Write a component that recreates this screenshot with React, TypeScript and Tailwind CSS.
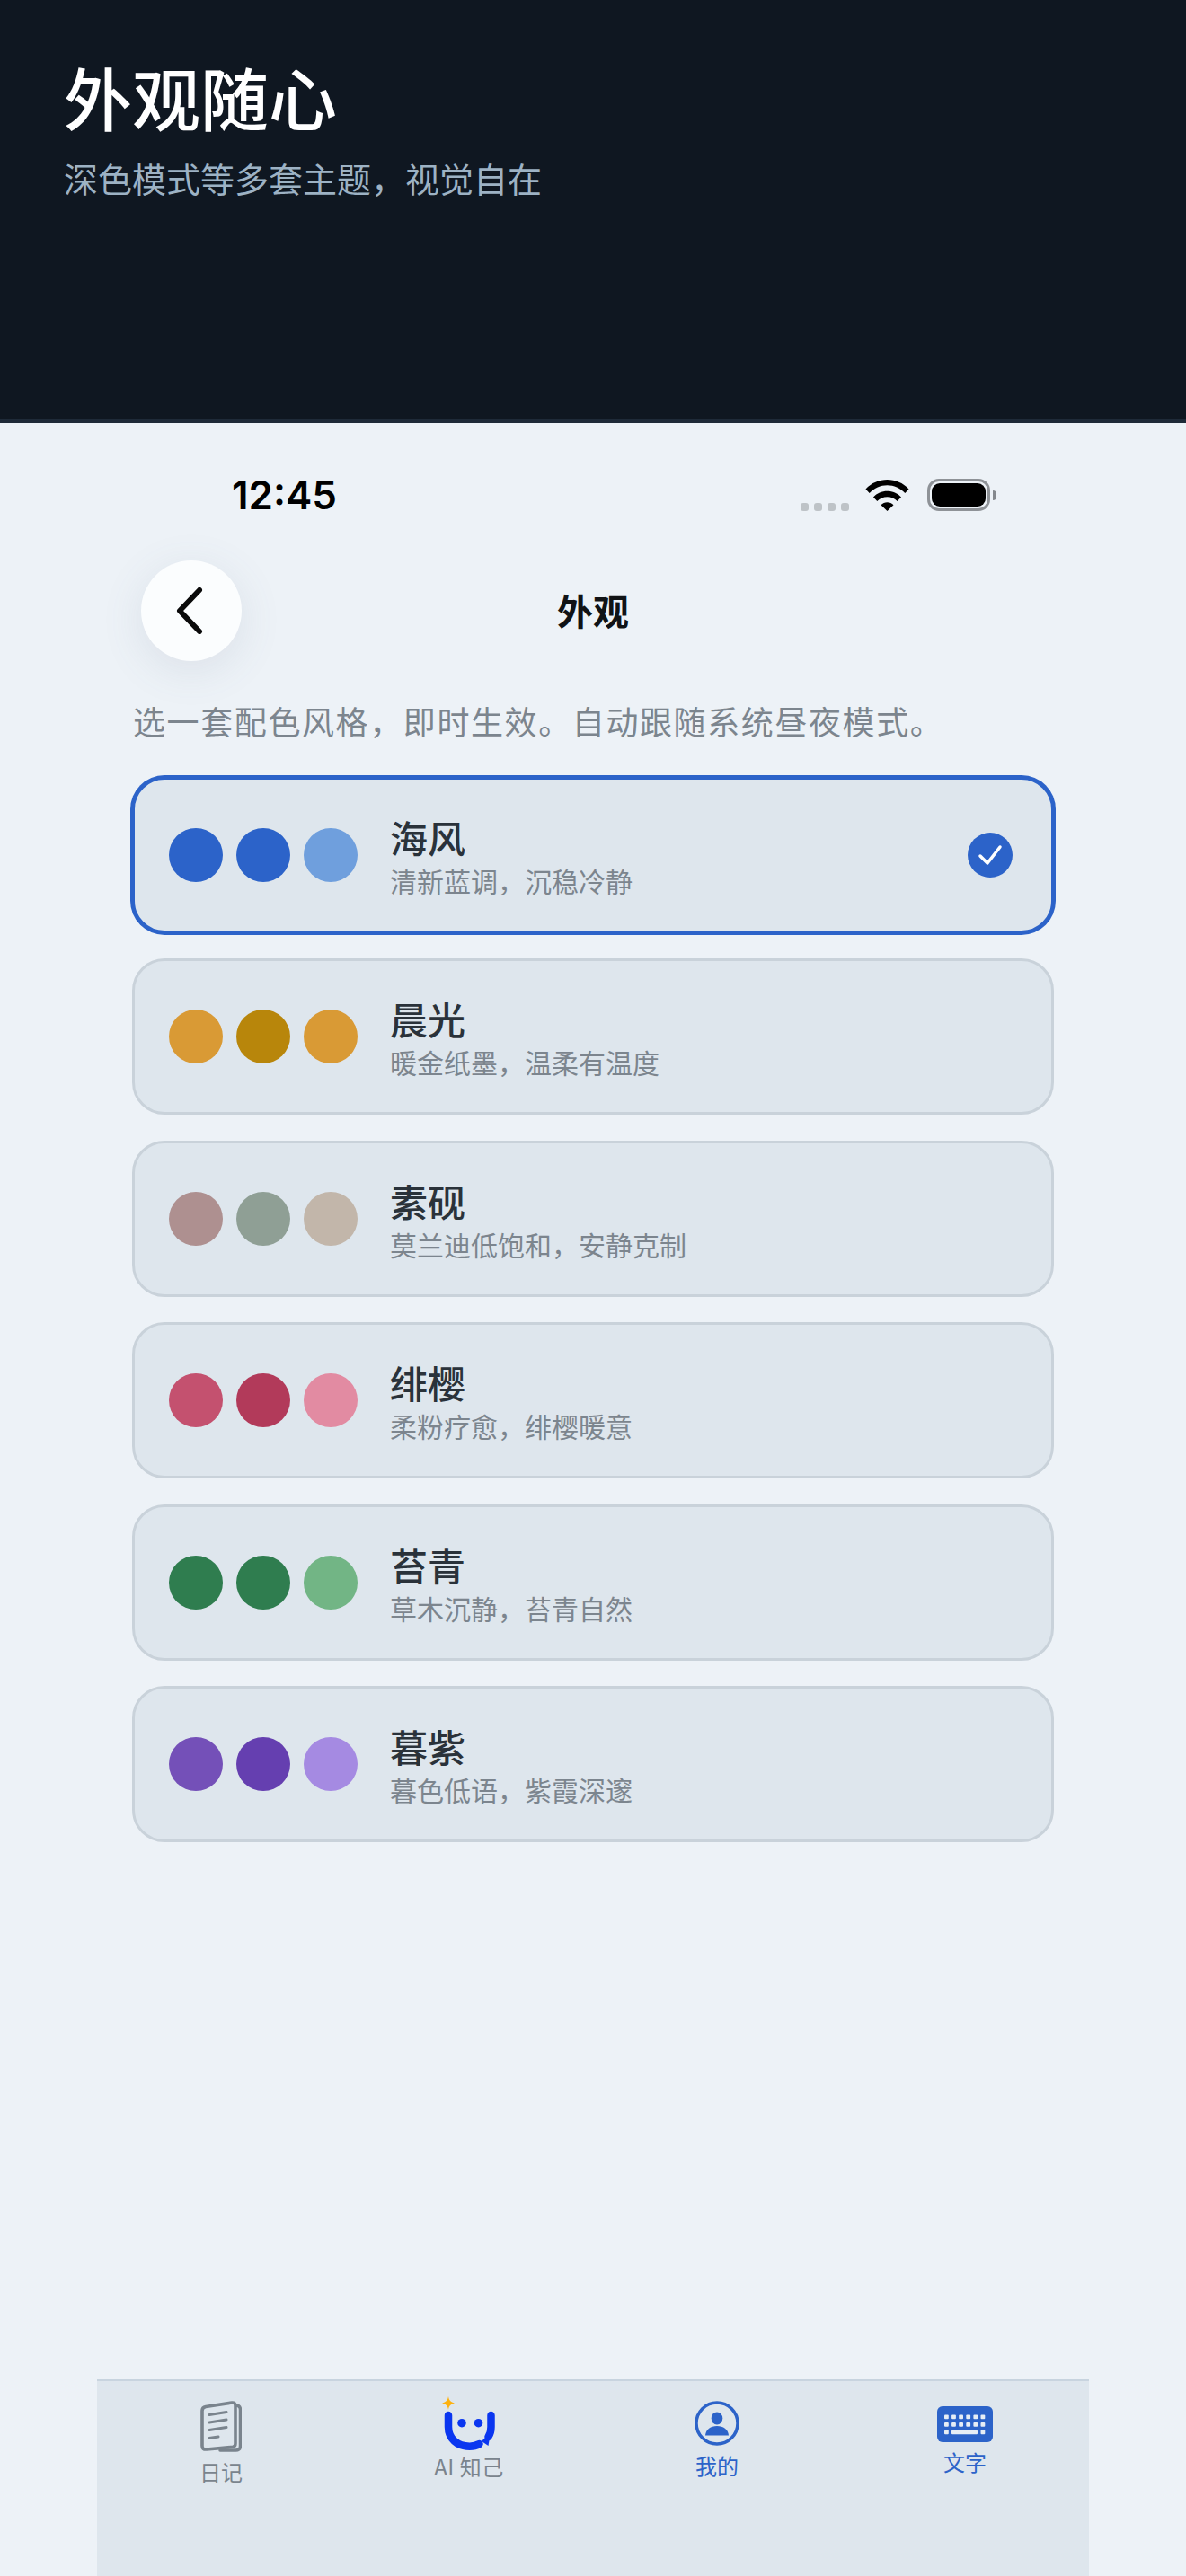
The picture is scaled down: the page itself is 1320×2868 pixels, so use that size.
import React from "react";

const cjk = "font-['Noto_Sans_CJK_SC','Noto_Sans',sans-serif]";

const themes = [
  { name: "海风", desc: "清新蓝调，沉稳冷静", colors: ["bg-[#2c63c9]", "bg-[#2c63c9]", "bg-[#6f9fdd]"], selected: true },
  { name: "晨光", desc: "暖金纸墨，温柔有温度", colors: ["bg-[#d99a35]", "bg-[#b8860b]", "bg-[#d99a35]"] },
  { name: "素砚", desc: "莫兰迪低饱和，安静克制", colors: ["bg-[#ae9090]", "bg-[#8f9f95]", "bg-[#c2b6aa]"] },
  { name: "绯樱", desc: "柔粉疗愈，绯樱暖意", colors: ["bg-[#c4516f]", "bg-[#b23a5a]", "bg-[#e28ba2]"] },
  { name: "苔青", desc: "草木沉静，苔青自然", colors: ["bg-[#2f7d4f]", "bg-[#2f7d4f]", "bg-[#72b585]"] },
  { name: "暮紫", desc: "暮色低语，紫霞深邃", colors: ["bg-[#7450b8]", "bg-[#653fb0]", "bg-[#a58ae2]"] },
];

function Wifi() {
  return (
    <svg width="49" height="36" viewBox="0 0 49 36">
      <path d="M0.5 11.5C7 4.5 15.5 1 24.5 1s17.5 3.5 24 10.5l-4.2 4.6C38.8 10.2 32 7.2 24.5 7.2S10.2 10.2 4.700 16.1z" fill="#000" />
      <path d="M9 20.500C13 16.200 18.500 13.800 24.500 13.800s11.500 2.400 15.500 6.700l-4.300 4.600C32.700 22 28.800 20.300 24.500 20.300S16.300 22 13.300 25.100z" fill="#000" />
      <path d="M17.500 29.300c1.900-1.900 4.300-3 7-3s5.100 1.100 7 3l-7 6.700z" fill="#000" />
    </svg>
  );
}

function Battery() {
  return (
    <div className="flex items-center gap-[3px]">
      <div className="w-[70px] h-[36px] rounded-[13px] border-[3px] border-[#8e9297] p-[2px]">
        <div className="w-full h-full rounded-[9px] bg-black" />
      </div>
      <div className="w-[4px] h-[11px] rounded-r-[4px] bg-[#85898e]" />
    </div>
  );
}

function DiaryIcon() {
  return (
    <svg width="46" height="58" viewBox="0 0 46 58" fill="none" strokeLinecap="round">
      <path d="M39 6c4 0 5.500 1.500 5.500 5v40c0 3-1.500 5-5 5H22" stroke="#7a848d" strokeWidth="3.500" />
      <path d="M6 7.500l29-4.500c2.500-.3 4 1 4 3.500v42c0 2-1 3.500-3 3.800L7 55c-3.500.3-5-1-5-4V12c0-2.500 1.500-4 4-4.500z" fill="#dee6ed" stroke="#7a848d" strokeWidth="3.600" />
      <path d="M10 16.500l19-3M10 25l19-3M10 33.500l19-3M10 42.500l10-1.500" stroke="#7a848d" strokeWidth="3" />
    </svg>
  );
}

function SmileIcon() {
  return (
    <svg width="60" height="62" viewBox="0 0 60 62" fill="none">
      <path d="M7 0c.7 4.500 2.500 6.300 7 7.500-4.500 1.200-6.300 3-7 7.500-.7-4.500-2.500-6.300-7-7.500 4.500-1.200 6.300-3 7-7.500z" fill="#fdb10e" />
      <path d="M7 21v13c0 13 10 21.700 23.700 21.700 4 0 7.500-.8 10.800-2.700" stroke="#0a36f0" strokeWidth="8.500" strokeLinecap="round" />
      <path d="M54.500 21v13c0 4.500-1 8-3 11" stroke="#0a36f0" strokeWidth="8.500" strokeLinecap="round" />
      <path d="M44 50l6-6 3 2-1.500 9z" fill="#0a36f0" />
      <circle cx="22" cy="29.700" r="4.800" fill="#0a36f0" />
      <circle cx="40.500" cy="29.700" r="4.800" fill="#0a36f0" />
    </svg>
  );
}

function ProfileIcon() {
  return (
    <svg width="50" height="50" viewBox="0 0 50 50" fill="none">
      <circle cx="25" cy="25" r="23" stroke="#2c63c9" strokeWidth="3.500" />
      <ellipse cx="25" cy="19.500" rx="6.300" ry="7" fill="#2c63c9" />
      <path d="M12 38.500c.5-6.500 6-10.500 13-10.500s12.500 4 13 10.500z" fill="#2c63c9" />
    </svg>
  );
}

function KeyboardIcon() {
  const rows = [0, 1];
  const cols = [0, 1, 2, 3, 4, 5];
  return (
    <svg width="62" height="40" viewBox="0 0 62 40">
      <rect x="0" y="0" width="62" height="40" rx="6" fill="#2c63c9" />
      {rows.map((r) =>
        cols.map((c) => (
          <rect key={`${r}-${c}`} x={8 + c * 8.100} y={9.500 + r * 8.500} width="4.800" height="4.800" rx="1" fill="#e6edf5" />
        ))
      )}
      <rect x="8" y="26.500" width="4.800" height="4.800" rx="1" fill="#e6edf5" />
      <rect x="16" y="26.500" width="29" height="4.800" rx="1" fill="#e6edf5" />
      <rect x="48.500" y="26.500" width="4.800" height="4.800" rx="1" fill="#e6edf5" />
    </svg>
  );
}

export default function App() {
  return (
    <div className={`w-[1320px] h-[2868px] flex flex-col bg-[#edf2f7] overflow-hidden ${cjk}`}>
      <header className="h-[471px] shrink-0 bg-[#0f1721] border-b-[5px] border-[#1e2a38] pl-[71px] pt-[51px]">
        <h1 className="text-[76px] leading-[112px] font-medium text-white">外观随心</h1>
        <p className="mt-[7px] text-[38px] leading-[56px] text-[#9db2c4]">深色模式等多套主题，视觉自在</p>
      </header>

      <div className="flex flex-col flex-1 min-h-0">
        <div className="mt-[62px] h-[36px] pl-[258px] pr-[211px] flex items-center justify-between">
          <span className="font-['Inter',sans-serif] text-[44px] leading-[36px] font-semibold text-black">12:45</span>
          <div className="flex items-center">
            <div className="flex gap-[6px] self-end mr-[18px]">
              <span className="w-[9px] h-[9px] rounded-[3px] bg-[#bec3c7]" />
              <span className="w-[9px] h-[9px] rounded-[3px] bg-[#bec3c7]" />
              <span className="w-[9px] h-[9px] rounded-[3px] bg-[#bec3c7]" />
              <span className="w-[9px] h-[9px] rounded-[3px] bg-[#bec3c7]" />
            </div>
            <Wifi />
            <div className="ml-[20px]">
              <Battery />
            </div>
          </div>
        </div>

        <nav className="relative mt-[55px] h-[112px] pb-[2px] flex items-center justify-center">
          <button className="absolute left-[157px] top-0 w-[112px] h-[112px] rounded-full bg-[#fbfdfe] shadow-[0_10px_48px_rgba(90,110,130,0.12)] flex items-center justify-center">
            <svg width="32" height="52" viewBox="0 0 32 52" fill="none" className="-translate-x-[2px]">
              <path d="M27 3L5 26l22 23" stroke="#0a0a0a" strokeWidth="6" strokeLinecap="round" strokeLinejoin="round" />
            </svg>
          </button>
          <span className="text-[40px] leading-[56px] font-semibold text-[#111315]">外观</span>
        </nav>

        <p className="mt-[41px] ml-[148px] text-[36px] leading-[50px] tracking-[1.600px] text-[#7c858e]">选一套配色风格，即时生效。自动跟随系统昼夜模式。</p>

        <div className="mt-[38px] mx-[147px] flex flex-col gap-[28.400px]">
          {themes.map((t) => (
            <div
              key={t.name}
              className={`h-[174px] rounded-[36px] bg-[#dee6ed] border-[3px] pl-[38px] pr-[43px] flex items-center ${t.selected ? "border-[#2c63c9] ring-2 ring-[#2c63c9]" : "border-[#c9d2da]"}`}
            >
              <div className="flex gap-[15px]">
                {t.colors.map((c, i) => (
                  <span key={i} className={`w-[60px] h-[60px] rounded-full ${c}`} />
                ))}
              </div>
              <div className="ml-[36px] flex-1 pt-[4px]">
                <div className="text-[42px] leading-[46px] font-medium text-[#2a323a]">{t.name}</div>
                <div className="mt-[6px] text-[30px] leading-[38px] text-[#7c858e]">{t.desc}</div>
              </div>
              {t.selected && (
                <div className="w-[50px] h-[50px] rounded-full bg-[#2c63c9] flex items-center justify-center">
                  <svg width="28" height="24" viewBox="0 0 28 24" fill="none">
                    <path d="M3 13l8 8L25 3" stroke="#fff" strokeWidth="3.500" strokeLinecap="round" strokeLinejoin="round" />
                  </svg>
                </div>
              )}
            </div>
          ))}
        </div>

        <div className="mt-auto mx-[108px] h-[219px] bg-[#dee6ed] border-t-2 border-[#c8d4df] grid grid-cols-4">
          <div className="flex flex-col items-center pt-[21px]">
            <DiaryIcon />
            <span className="mt-[6px] text-[24px] leading-[32px] text-[#7a848d]">日记</span>
          </div>
          <div className="flex flex-col items-center pt-[17px]">
            <SmileIcon />
            <span className="mt-[0px] text-[24px] leading-[32px] tracking-[0.500px] text-[#7a848d]">AI 知己</span>
          </div>
          <div className="flex flex-col items-center pt-[22px]">
            <ProfileIcon />
            <span className="mt-[6px] text-[24px] leading-[32px] text-[#2c63c9]">我的</span>
          </div>
          <div className="flex flex-col items-center pt-[28px]">
            <KeyboardIcon />
            <span className="mt-[6px] text-[24px] leading-[32px] text-[#2c63c9]">文字</span>
          </div>
        </div>
      </div>
    </div>
  );
}
